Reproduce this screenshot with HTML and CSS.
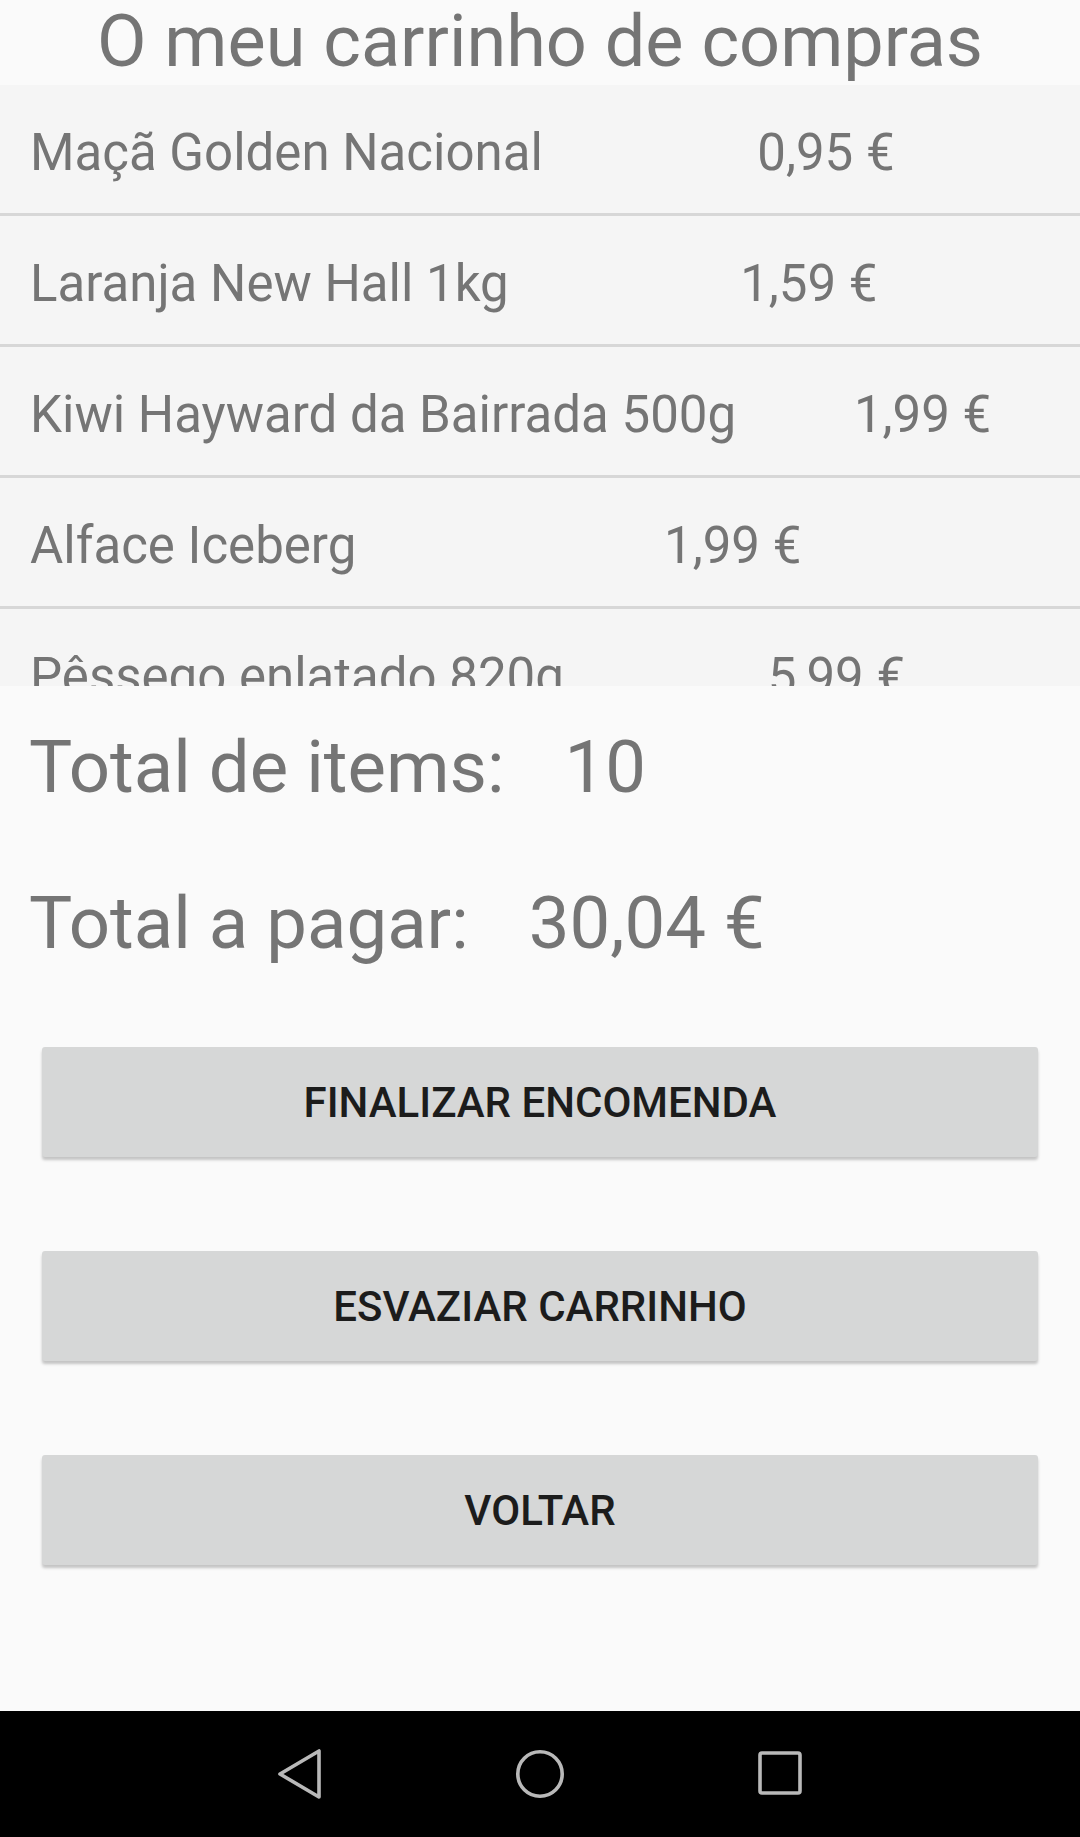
FILE: index.html
```html
<!DOCTYPE html>
<html lang="pt">
<head>
  <meta charset="UTF-8">
  <meta name="viewport" content="width=device-width, initial-scale=1.0">
  <title>O meu carrinho de compras</title>
  <link rel="stylesheet" href="styles.css">
</head>
<body>

<div class="screen">
  <h1 class="title">O meu carrinho de compras</h1>

  <!-- Lista de produtos -->
  <ul class="cart-list">
    <li><span class="name">Maçã Golden Nacional</span><span class="price">0,95 €</span></li>
    <li><span class="name">Laranja New Hall 1kg</span><span class="price">1,59 €</span></li>
    <li><span class="name">Kiwi Hayward da Bairrada 500g</span><span class="price">1,99 €</span></li>
    <li><span class="name">Alface Iceberg</span><span class="price">1,99 €</span></li>
    <li><span class="name">Pêssego enlatado 820g</span><span class="price">5,99 €</span></li>
  </ul>

  <div class="totals">
    <div class="total-line"><span>Total de items:</span><span class="value">10</span></div>
    <div class="total-line"><span>Total a pagar:</span><span class="value">30,04 €</span></div>
  </div>

  <div class="actions">
    <button class="btn">Finalizar encomenda</button>
    <button class="btn">Esvaziar carrinho</button>
    <button class="btn">Voltar</button>
  </div>
</div>

<div class="navbar">
  <svg class="nav-icon" viewBox="0 0 60 60">
    <path d="M49 7 L49 53 L10 30 Z" fill="none" stroke="#b9b9b9" stroke-width="3.6" stroke-linejoin="round"/>
  </svg>
  <svg class="nav-icon" viewBox="0 0 60 60">
    <circle cx="30" cy="30" r="22.2" fill="none" stroke="#b9b9b9" stroke-width="3.6"/>
  </svg>
  <svg class="nav-icon" viewBox="0 0 60 60">
    <rect x="10" y="9" width="40" height="40" rx="2" fill="none" stroke="#b9b9b9" stroke-width="3.6"/>
  </svg>
</div>

</body>
</html>
```

FILE: styles.css
```css
body {
  margin: 0;
  padding: 0;
  background-color: #fafafa;
  font-family: Roboto, "Noto Sans", sans-serif;
  color: #757575;
}
.screen {
  height: 1711px;
  overflow: hidden;
}
.title {
  margin: 0;
  height: 85px;
  line-height: 83px;
  font-size: 72px;
  font-weight: 400;
  text-align: center;
  white-space: nowrap;
}
.cart-list {
  list-style: none;
  margin: 0;
  padding: 0;
  height: 601px;
  overflow: hidden;
  background-color: #f5f5f5;
}
.cart-list li {
  display: flex;
  height: 121px;
  padding: 7px 0 0 30px;
  line-height: 121px;
  font-size: 51px;
  border-bottom: 3px solid #d7d7d7;
  white-space: nowrap;
}
.price {
  flex: 1;
  padding-left: 29px;
  text-align: center;
}
.totals {
  padding: 32px 0 0 29px;
}
.total-line {
  height: 100px;
  line-height: 100px;
  font-size: 72.5px;
  white-space: nowrap;
}
.total-line + .total-line {
  margin-top: 56px;
}
.value {
  margin-left: 60px;
}
.actions {
  display: flex;
  flex-direction: column;
  gap: 94px;
  padding: 73px 42px 0 42px;
}
.btn {
  height: 110px;
  border: none;
  border-radius: 3px;
  background-color: #d6d7d7;
  box-shadow: 0 3px 3px rgba(0, 0, 0, 0.22);
  font-family: Roboto, "Noto Sans", sans-serif;
  font-size: 42px;
  font-weight: 500;
  text-transform: uppercase;
  color: #1c1c1c;
  cursor: pointer;
}
.navbar {
  height: 126px;
  background-color: #000;
  display: flex;
  justify-content: center;
  align-items: center;
  gap: 180px;
}
.nav-icon {
  width: 60px;
  height: 60px;
}
```
